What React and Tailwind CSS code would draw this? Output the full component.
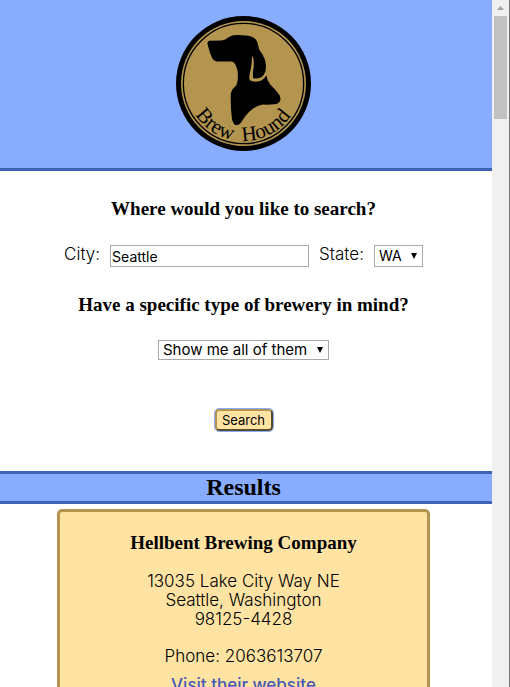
import React from "react";

const heading = "font-['Liberation_Serif',serif] text-[19px] leading-6 font-bold";

function Logo() {
  return (
    <svg viewBox="19 18 404 404" className="size-[135px]" role="img" aria-label="Brew Hound">
      <circle cx="221" cy="220" r="202" fill="#000" />
      <circle cx="221" cy="220" r="187" fill="#b39550" />
      <circle cx="221" cy="220" r="180" fill="none" stroke="#000" strokeWidth="4" />
      <path
        d="M119 92 L155 91 Q168 89 175 82 Q188 74 205 75 Q232 75 246 80 Q262 86 265 107 Q266 119 277 132 Q286 145 288 164 Q290 187 277 199 Q266 207 250 204 Q248 195 250 180 Q254 158 250 142 L246 138 Q247 160 242 180 Q236 202 240 210 Q250 217 268 213 Q282 209 290 195 Q291 211 301 223 Q317 238 329 255 Q337 276 319 281 Q298 284 279 283 Q243 289 216 333 Q208 347 196 344 Q188 339 186 322 Q182 294 183 252 Q185 237 199 226 Q205 216 204 188 Q200 159 187 154 L142 154 Q130 153 126 141 Q119 126 114 105 Q111 93 119 92 Z"
        fill="#000"
      />
      <path id="name-arc" d="M49 220 A172 172 0 0 0 393 220" fill="none" />
      <g fontFamily="'Liberation Serif', serif" fontSize="63" fill="#000">
        <text>
          <textPath href="#name-arc" startOffset="99">Brew</textPath>
        </text>
        <text>
          <textPath href="#name-arc" startOffset="266">Hound</textPath>
        </text>
      </g>
    </svg>
  );
}

function Dropdown({ id, label, options, className }) {
  return (
    <span className="relative inline-flex">
      <select
        id={id}
        aria-label={label}
        className={`appearance-none rounded-none border border-[#a9a9a9] bg-white pl-1 font-['Inter',sans-serif] leading-4 font-normal ${className}`}
      >
        {options.map((option) => (
          <option key={option}>{option}</option>
        ))}
      </select>
      <svg viewBox="0 0 6 6" className="pointer-events-none absolute top-1/2 right-1.5 size-1.5 -translate-y-1/2">
        <path d="M0 0H6L3 6Z" />
      </svg>
    </span>
  );
}

function Scrollbar() {
  return (
    <div className="flex w-[18px] shrink-0 flex-col items-center border-r border-[#707070] bg-[#f0f0f0]" aria-hidden="true">
      <svg viewBox="0 0 17 16" className="h-4 w-[17px] shrink-0">
        <path d="M5 10H12L8.5 6Z" fill="#a3a3a3" />
      </svg>
      <div className="h-[103px] w-[13px] bg-[#c1c1c1]" />
    </div>
  );
}

export default function App() {
  return (
    <div className="flex h-screen overflow-hidden bg-white font-['Inter','Liberation_Sans',sans-serif] text-[17px] font-light text-black">
      <div className="min-w-0 flex-1">
        <header className="flex justify-center border-b-3 border-[#3e64b5] bg-[#88adff] pt-4 pr-[5px] pb-[17px]">
          <Logo />
        </header>

        <form className="flex flex-col items-center pt-[26px] pr-[5px]" onSubmit={(e) => e.preventDefault()}>
          <h2 className={heading}>Where would you like to search?</h2>
          <div className="mt-6 flex items-start leading-[19px]">
            <label htmlFor="city">City:</label>
            <input
              id="city"
              type="text"
              defaultValue="Seattle"
              className="ml-2.5 h-[22px] w-[199px] border border-[#a9a9a9] bg-white px-px text-[14px] font-normal"
            />
            <label htmlFor="state" className="mx-2.5">State:</label>
            <Dropdown id="state" options={["WA", "OR", "CA"]} className="h-[22px] w-[49px] text-[14px]" />
          </div>
          <h2 className={`mt-[26px] ${heading}`}>Have a specific type of brewery in mind?</h2>
          <div className="mt-[23px] flex">
            <Dropdown
              id="type"
              label="Brewery type"
              options={["Show me all of them", "Micro", "Brewpub"]}
              className="h-5 w-[171px] text-[15px]"
            />
          </div>
          <button
            type="submit"
            className="mt-[49px] h-[22px] w-[58px] rounded-sm border-2 border-t-[#b39550] border-r-[#5c4d29] border-b-[#5c4d29] border-l-[#b39550] bg-[#ffe3a3] font-['Inter',sans-serif] text-[13px] leading-4 font-normal outline-1 outline-[#88adff]"
          >
            Search
          </button>
        </form>

        <h2 className="mt-10 border-y-3 border-[#3e64b5] bg-[#88adff] pr-[5px] text-center font-['Liberation_Serif',serif] text-2xl leading-[27px] font-bold">
          Results
        </h2>

        <main className="mt-[5px] pr-[62px] pl-[57px]">
          <article className="rounded-[5px] border-3 border-[#b39550] bg-[#ffe3a3] pt-[19px] pb-6 text-center leading-[19px]">
            <h3 className={heading}>Hellbent Brewing Company</h3>
            <address className="mt-[17px] not-italic">
              13035 Lake City Way NE
              <br />
              Seattle, Washington
              <br />
              98125-4428
            </address>
            <p className="mt-[18px]">Phone: 2063613707</p>
            <a href="#website" className="mt-2.5 inline-block font-medium text-[#4659b5]">
              Visit their website
            </a>
          </article>
        </main>
      </div>
      <Scrollbar />
    </div>
  );
}
